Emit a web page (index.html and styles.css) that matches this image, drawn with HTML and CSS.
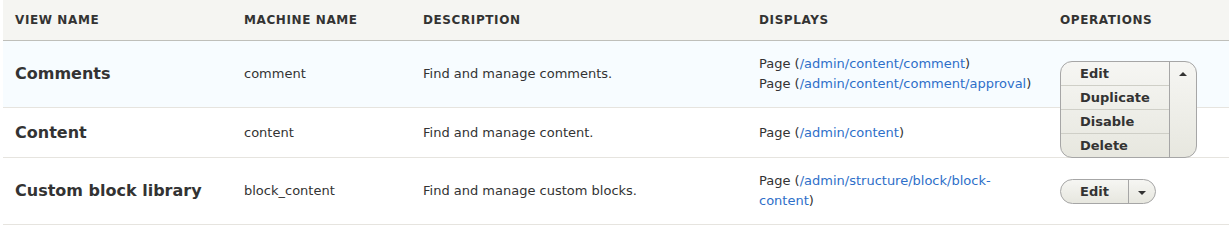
FILE: index.html
```html
<!DOCTYPE html>
<html lang="en">
<head>
    <meta charset="UTF-8">
    <title>Views</title>
    <link rel="stylesheet" href="styles.css">
</head>
<body>
    <div class="page">
        <table class="views-listing">
            <colgroup>
                <col class="col-name">
                <col class="col-machine">
                <col class="col-desc">
                <col class="col-displays">
                <col class="col-ops">
            </colgroup>
            <thead>
                <tr>
                    <th>View name</th>
                    <th>Machine name</th>
                    <th>Description</th>
                    <th>Displays</th>
                    <th>Operations</th>
                </tr>
            </thead>
            <tbody>
                <tr class="is-hover">
                    <td class="view-name">Comments</td>
                    <td>comment</td>
                    <td>Find and manage comments.</td>
                    <td>
                        <ul class="displays">
                            <li>Page (<a href="#">/admin/content/comment</a>)</li>
                            <li>Page (<a href="#">/admin/content/comment/approval</a>)</li>
                        </ul>
                    </td>
                    <td>
                        <div class="dropbutton-wrapper">
                            <div class="dropbutton open">
                                <ul class="dropbutton-list">
                                    <li><a href="#">Edit</a></li>
                                    <li><a href="#">Duplicate</a></li>
                                    <li><a href="#">Disable</a></li>
                                    <li><a href="#">Delete</a></li>
                                </ul>
                                <button class="dropbutton-toggle"><span class="arrow up"></span></button>
                            </div>
                        </div>
                    </td>
                </tr>
                <tr>
                    <td class="view-name">Content</td>
                    <td>content</td>
                    <td>Find and manage content.</td>
                    <td>
                        <ul class="displays">
                            <li>Page (<a href="#">/admin/content</a>)</li>
                        </ul>
                    </td>
                    <td>
                        <!-- button sits under the open menu above -->
                        <div class="dropbutton-wrapper"></div>
                    </td>
                </tr>
                <tr>
                    <td class="view-name">Custom block library</td>
                    <td>block_content</td>
                    <td>Find and manage custom blocks.</td>
                    <td>
                        <ul class="displays">
                            <li>Page (<a href="#">/admin/structure/block/block-content</a>)</li>
                        </ul>
                    </td>
                    <td>
                        <div class="dropbutton-wrapper">
                            <div class="dropbutton">
                                <ul class="dropbutton-list">
                                    <li><a href="#">Edit</a></li>
                                </ul>
                                <button class="dropbutton-toggle"><span class="arrow"></span></button>
                            </div>
                        </div>
                    </td>
                </tr>
            </tbody>
        </table>
    </div>
</body>
</html>
```

FILE: styles.css
```css
body {
    margin: 0;
    background: #fff;
    color: #333;
    font-family: "DejaVu Sans", sans-serif;
    font-size: 13px;
}
.page {
    padding-left: 3px;
}
.views-listing {
    width: 1226px;
    border-collapse: collapse;
    table-layout: fixed;
}
.col-name { width: 229px; }
.col-machine { width: 179px; }
.col-desc { width: 336px; }
.col-displays { width: 301px; }
.col-ops { width: 181px; }
th {
    background: #f5f5f2;
    border-bottom: 1px solid #bfbfba;
    padding: 10px 12px;
    line-height: 20px;
    text-align: left;
    font-size: 12px;
    font-weight: bold;
    text-transform: uppercase;
    letter-spacing: 0.05em;
    color: #333;
}
td {
    padding: 13px 12px;
    line-height: 20px;
    border-bottom: 1px solid #e6e4df;
    vertical-align: middle;
}
tr.is-hover td {
    background: #f7fcff;
}
.view-name {
    font-size: 16px;
    font-weight: bold;
}
.displays {
    list-style: none;
    margin: 0;
    padding: 0;
}
a {
    color: #2e6fc9;
    text-decoration: none;
}
.dropbutton-wrapper {
    position: relative;
    height: 23px;
}
.dropbutton {
    position: absolute;
    top: -1px;
    left: 0;
    z-index: 1;
    display: flex;
    border: 1px solid #a6a6a6;
    border-radius: 20em;
    background: linear-gradient(#f6f6f3, #e7e7df);
    overflow: hidden;
}
.dropbutton.open {
    top: -2px;
    z-index: 10;
    border-radius: 12px;
}
.dropbutton-list {
    list-style: none;
    margin: 0;
    padding: 0;
}
.dropbutton-list li + li {
    border-top: 1px solid #cfcfc7;
}
.dropbutton-list a {
    display: block;
    padding: 0 19px;
    line-height: 23px;
    font-weight: bold;
    color: #333;
}
.dropbutton-toggle {
    display: flex;
    justify-content: center;
    align-items: flex-start;
    width: 27px;
    margin: 0;
    padding: 10px 0 0;
    border: none;
    border-left: 1px solid #a6a6a6;
    background: transparent;
    cursor: pointer;
}
.arrow {
    width: 0;
    height: 0;
    margin-top: 1px;
    border-left: 4px solid transparent;
    border-right: 4px solid transparent;
    border-top: 4px solid #333;
}
.arrow.up {
    margin-top: 0;
    border-top: none;
    border-bottom: 4px solid #333;
}
```
